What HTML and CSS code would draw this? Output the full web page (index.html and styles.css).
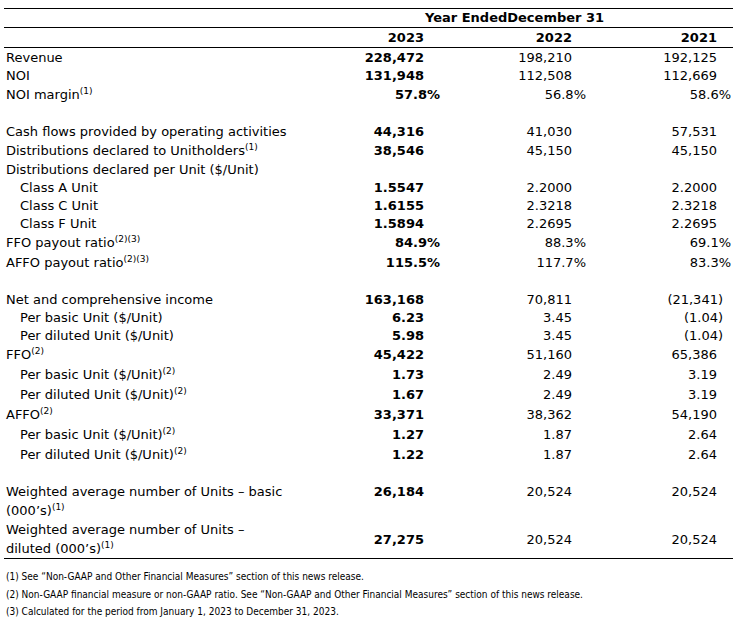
FILE: index.html
```html
<!DOCTYPE html>
<html>
<head>
<meta charset="utf-8">
<link rel="stylesheet" href="styles.css">
</head>
<body>
<div class="page">
<table class="fin">
<colgroup>
<col class="c-label"><col class="c-y1"><col class="c-y2"><col class="c-y3">
</colgroup>
<thead>
<tr class="h1"><th></th><th colspan="3" class="period">Year EndedDecember 31</th></tr>
<tr class="h2"><th></th><th class="num">2023</th><th class="num">2022</th><th class="num">2021</th></tr>
</thead>
<tbody>
<tr><td>Revenue</td><td class="num b">228,472</td><td class="num">198,210</td><td class="num">192,125</td></tr>
<tr><td>NOI</td><td class="num b">131,948</td><td class="num">112,508</td><td class="num">112,669</td></tr>
<tr class="tall"><td>NOI margin<sup>(1)</sup></td><td class="num b"><span class="pct1">57.8%</span></td><td class="num"><span class="pct">56.8%</span></td><td class="num"><span class="pct">58.6%</span></td></tr>
<tr class="gap"><td colspan="4"></td></tr>
<tr><td>Cash flows provided by operating activities</td><td class="num b">44,316</td><td class="num">41,030</td><td class="num">57,531</td></tr>
<tr class="tall"><td>Distributions declared to Unitholders<sup>(1)</sup></td><td class="num b">38,546</td><td class="num">45,150</td><td class="num">45,150</td></tr>
<tr><td>Distributions declared per Unit ($/Unit)</td><td></td><td></td><td></td></tr>
<tr><td class="ind">Class A Unit</td><td class="num b">1.5547</td><td class="num">2.2000</td><td class="num">2.2000</td></tr>
<tr><td class="ind">Class C Unit</td><td class="num b">1.6155</td><td class="num">2.3218</td><td class="num">2.3218</td></tr>
<tr><td class="ind">Class F Unit</td><td class="num b">1.5894</td><td class="num">2.2695</td><td class="num">2.2695</td></tr>
<tr class="tall"><td>FFO payout ratio<sup>(2)(3)</sup></td><td class="num b"><span class="pct1">84.9%</span></td><td class="num"><span class="pct">88.3%</span></td><td class="num"><span class="pct">69.1%</span></td></tr>
<tr class="tall"><td>AFFO payout ratio<sup>(2)(3)</sup></td><td class="num b"><span class="pct1">115.5%</span></td><td class="num"><span class="pct">117.7%</span></td><td class="num"><span class="pct">83.3%</span></td></tr>
<tr class="gap"><td colspan="4"></td></tr>
<tr><td>Net and comprehensive income</td><td class="num b">163,168</td><td class="num">70,811</td><td class="num"><span class="neg">(21,341)</span></td></tr>
<tr><td class="ind">Per basic Unit ($/Unit)</td><td class="num b">6.23</td><td class="num">3.45</td><td class="num"><span class="neg">(1.04)</span></td></tr>
<tr><td class="ind">Per diluted Unit ($/Unit)</td><td class="num b">5.98</td><td class="num">3.45</td><td class="num"><span class="neg">(1.04)</span></td></tr>
<tr class="tall"><td>FFO<sup>(2)</sup></td><td class="num b">45,422</td><td class="num">51,160</td><td class="num">65,386</td></tr>
<tr class="tall"><td class="ind">Per basic Unit ($/Unit)<sup>(2)</sup></td><td class="num b">1.73</td><td class="num">2.49</td><td class="num">3.19</td></tr>
<tr class="tall"><td class="ind">Per diluted Unit ($/Unit)<sup>(2)</sup></td><td class="num b">1.67</td><td class="num">2.49</td><td class="num">3.19</td></tr>
<tr class="tall"><td>AFFO<sup>(2)</sup></td><td class="num b">33,371</td><td class="num">38,362</td><td class="num">54,190</td></tr>
<tr class="tall"><td class="ind">Per basic Unit ($/Unit)<sup>(2)</sup></td><td class="num b">1.27</td><td class="num">1.87</td><td class="num">2.64</td></tr>
<tr class="tall"><td class="ind">Per diluted Unit ($/Unit)<sup>(2)</sup></td><td class="num b">1.22</td><td class="num">1.87</td><td class="num">2.64</td></tr>
<tr class="gap2"><td colspan="4"></td></tr>
<tr class="two top"><td>Weighted average number of Units – basic<br>(000’s)<sup>(1)</sup></td><td class="num b">26,184</td><td class="num">20,524</td><td class="num">20,524</td></tr>
<tr class="two last"><td>Weighted average number of Units –<br>diluted (000’s)<sup>(1)</sup></td><td class="num b">27,275</td><td class="num">20,524</td><td class="num">20,524</td></tr>
</tbody>
</table>
<div class="notes">
<p>(1) See “Non-GAAP and Other Financial Measures” section of this news release.</p>
<p>(2) Non-GAAP financial measure or non-GAAP ratio. See “Non-GAAP and Other Financial Measures” section of this news release.</p>
<p>(3) Calculated for the period from January 1, 2023 to December 31, 2023.</p>
</div>
</div>
</body>
</html>
```
FILE: styles.css
```css
html, body {
  margin: 0;
  padding: 0;
  background: #ffffff;
}
.page {
  padding: 8px 0 0 4px;
  font-family: "DejaVu Sans", Verdana, sans-serif;
  font-size: 13px;
  color: #000;
}
.fin {
  border-collapse: collapse;
  table-layout: fixed;
  width: 729px;
  border-top: 1px solid #000;
}
.c-label { width: 356px; }
.c-y1 { width: 81px; }
.c-y2 { width: 148px; }
.c-y3 { width: 144px; }
.fin th, .fin td {
  padding: 0 0 0 2px;
  line-height: 16px;
  height: 18px;
  vertical-align: middle;
  white-space: nowrap;
  font-weight: normal;
}
.fin thead th { font-weight: bold; }
.h1 th { height: 18px; border-bottom: 1px solid #000; }
.h2 th { height: 19px; border-bottom: 1px solid #000; }
.fin tbody tr:first-child td { height: 19px; }
.period { text-align: center; padding-right: 66px !important; }
.fin .num { text-align: right; padding-right: 17px; }
.fin td.num:nth-child(4), .fin th.num:nth-child(4) { padding-right: 16px; }
.b { font-weight: bold !important; }
.ind { padding-left: 16px !important; }
.tall td { height: 20px; }
.gap td { height: 18px; }
.gap2 td { height: 17px; }
.pct { margin-right: -14px; }
.pct1 { margin-right: -16px; }
.neg { margin-right: -6px; }
sup {
  font-size: 9px;
  line-height: 0;
  vertical-align: 5px;
}
.two td { height: 38px; line-height: 19px; }
.two.top td.num { vertical-align: top; }
.last td { border-bottom: 1px solid #000; }
.notes {
  font-family: "DejaVu Sans Condensed", Tahoma, sans-serif;
  font-size: 10px;
  padding: 9px 0 0 2px;
}
.notes p {
  margin: 0;
  line-height: 17.5px;
}
```
